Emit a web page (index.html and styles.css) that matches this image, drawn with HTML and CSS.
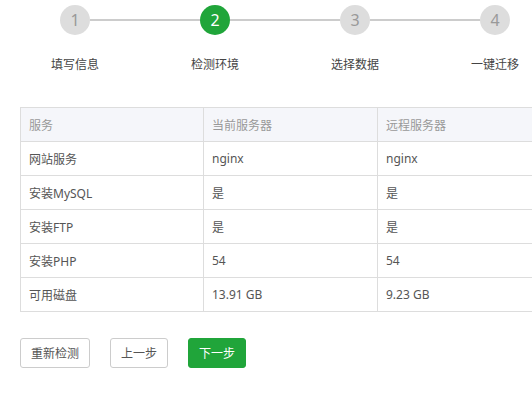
FILE: index.html
```html
<!DOCTYPE html>
<html lang="zh-CN">
<head>
    <meta charset="UTF-8">
    <meta name="viewport" content="width=device-width, initial-scale=1.0">
    <title>一键迁移</title>
    <link rel="stylesheet" href="styles.css">
</head>
<body>
    <div class="wizard">
        <div class="steps">
            <span class="step-num">1</span>
            <span class="step-line"></span>
            <span class="step-num active">2</span>
            <span class="step-line"></span>
            <span class="step-num">3</span>
            <span class="step-line"></span>
            <span class="step-num">4</span>
        </div>
        <div class="step-labels">
            <span>填写信息</span>
            <span>检测环境</span>
            <span>选择数据</span>
            <span>一键迁移</span>
        </div>

        <table class="env-table">
            <thead>
                <tr>
                    <th class="col-name">服务</th>
                    <th class="col-local">当前服务器</th>
                    <th>远程服务器</th>
                </tr>
            </thead>
            <tbody>
                <tr><td>网站服务</td><td>nginx</td><td>nginx</td></tr>
                <tr><td>安装MySQL</td><td>是</td><td>是</td></tr>
                <tr><td>安装FTP</td><td>是</td><td>是</td></tr>
                <tr><td>安装PHP</td><td>54</td><td>54</td></tr>
                <tr><td>可用磁盘</td><td>13.91 GB</td><td>9.23 GB</td></tr>
            </tbody>
        </table>

        <div class="actions">
            <button class="btn">重新检测</button>
            <button class="btn">上一步</button>
            <button class="btn btn-success">下一步</button>
        </div>
    </div>
</body>
</html>
```

FILE: styles.css
```css
html, body {
    margin: 0;
    padding: 0;
    overflow: hidden;
}
body {
    font-family: "Noto Sans", "Noto Sans CJK SC", sans-serif;
    font-size: 12px;
    color: #555;
    background-color: #fff;
}
.wizard {
    width: 600px;
    padding: 5px 0 0 0;
}
.steps {
    display: flex;
    align-items: center;
    margin-left: 60px;
}
.step-num {
    width: 30px;
    height: 30px;
    border-radius: 50%;
    background-color: #ddd;
    color: #999;
    font-size: 16px;
    line-height: 30px;
    text-align: center;
    flex-shrink: 0;
}
.step-num.active {
    background-color: #20a53a;
    color: #fff;
}
.step-line {
    width: 110px;
    height: 2px;
    background-color: #ccc;
    flex-shrink: 0;
}
.step-labels {
    display: grid;
    grid-template-columns: repeat(4, 140px);
    margin: 20px 0 0 5px;
    line-height: 20px;
    color: #444;
}
.step-labels span {
    text-align: center;
}
.env-table {
    margin: 32px 0 0 20px;
    width: 560px;
    border-collapse: collapse;
}
.env-table th,
.env-table td {
    border: 1px solid #ddd;
    height: 33px;
    padding: 0 8px;
    text-align: left;
    font-weight: normal;
}
.env-table th {
    background-color: #f5f6fa;
    color: #999;
}
.col-name {
    width: 166px;
}
.col-local {
    width: 157px;
}
.actions {
    display: flex;
    gap: 20px;
    margin: 26px 0 0 20px;
}
.btn {
    font-family: inherit;
    font-size: 12px;
    height: 30px;
    padding: 0 10px;
    border: 1px solid #ccc;
    border-radius: 3px;
    background-color: #fff;
    color: #555;
    cursor: pointer;
}
.btn-success {
    background-color: #20a53a;
    border-color: #20a53a;
    color: #fff;
}
```
